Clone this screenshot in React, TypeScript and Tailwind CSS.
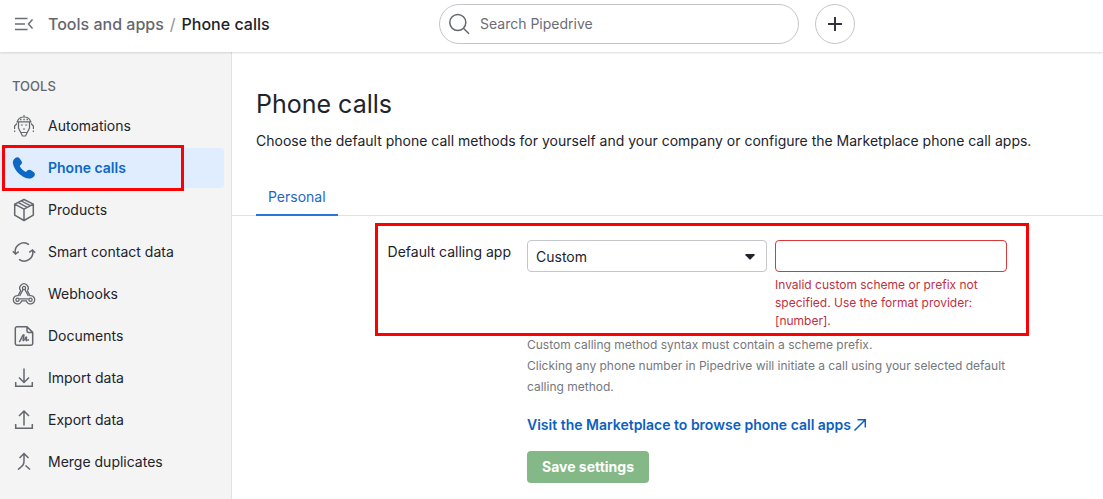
import type { ReactNode } from "react";

function Icon({ children }: { children: ReactNode }) {
  return (
    <svg
      viewBox="0 0 24 24"
      className="size-6 shrink-0"
      fill="none"
      stroke="currentColor"
      strokeWidth="1.5"
      aria-hidden="true"
    >
      {children}
    </svg>
  );
}

const tools = [
  {
    name: "Automations",
    icon: (
      <Icon>
        <g strokeWidth="1.2">
          <path d="M5.500 7.500C6.200 4.500 8.500 3 12 3s5.800 1.500 6.500 4.500M12 1v2M4.500 7.800h15" />
          <path strokeWidth="1.500" d="M8 5.500h1.500M11.300 5.500h1.500M14.500 5.500H16" />
          <path d="M6.500 8v6l2.500 5 1.500 3h3l1.500-3 2.500-5V8M8.500 18.500h7" />
          <path d="M8.800 11h2M13.200 11h2M11 15h2" />
          <path d="M5 9.500 2.600 12v3M19 9.500l2.400 2.500v3M2.600 16.500V18M21.400 16.500V18" />
        </g>
      </Icon>
    ),
  },
  {
    name: "Phone calls",
    active: true,
    icon: (
      <Icon>
        <path
          fill="currentColor"
          stroke="none"
          d="M3 2.200C4.600.700 6.500.900 7.700 2.500l1.700 2.400c.9 1.300.7 2.700-.4 3.700l-.9.800c-.4.400-.4.900 0 1.400 1.300 2 2.900 3.500 4.900 4.800.5.300 1 .3 1.400-.1l.9-.9c1-1 2.400-1.200 3.700-.3l2.600 1.700c1.600 1.100 1.800 3 .4 4.500-1.300 1.500-3.300 2.300-5.500 2C9.300 21.500 2.100 14.200.900 7.200.600 5.200 1.500 3.500 3 2.200Z"
        />
      </Icon>
    ),
  },
  {
    name: "Products",
    icon: (
      <Icon>
        <path strokeLinejoin="round" d="m12 1.500 9.300 4.700v11L12 22.500l-9.300-5.300v-11L12 1.500ZM2.700 6.200l9.300 5 9.300-5M12 11.200v11.300" />
        <path strokeWidth="1.300" d="m9.300 3 9 4.700M6.300 4.600l9 4.700" />
      </Icon>
    ),
  },
  {
    name: "Smart contact data",
    icon: (
      <Icon>
        <path d="M17 4.600A8.700 8.700 0 0 0 3.400 13.500M7 19.400A8.700 8.700 0 0 0 20.600 10.500" />
        <path d="m.800 11.300 2.700 2.700 3.200-2.400M17.300 12.400l3.200-2.400 2.700 2.700" />
      </Icon>
    ),
  },
  {
    name: "Webhooks",
    icon: (
      <Icon>
        <g strokeWidth="1.300">
          <circle cx="12" cy="6" r="1.600" />
          <circle cx="5.500" cy="17.800" r="1.600" />
          <circle cx="18.500" cy="17.800" r="1.600" />
          <path d="M15.300 8.600a4.200 4.200 0 1 0-6.600 0L6.200 13.600a4.200 4.200 0 1 0 3.400 5.200h4.800a4.200 4.200 0 1 0 3.400-5.200l-2.500-5" />
          <path d="M11 7.600 7.600 14M7.300 16.900h9.400M13 7.600l3.400 6.400" />
        </g>
      </Icon>
    ),
  },
  {
    name: "Documents",
    icon: (
      <Icon>
        <path strokeLinejoin="round" d="M15 2.700H5a1.700 1.700 0 0 0-1.700 1.700v15.200c0 .9.800 1.700 1.700 1.700h14a1.700 1.700 0 0 0 1.700-1.700V8.400L15 2.700Zm0 0v4.200c0 .9.600 1.500 1.500 1.500h4.200" />
        <path strokeWidth="1.400" strokeLinejoin="round" strokeLinecap="round" d="M7.500 17.500c2-2 2.700-6.800 4.200-6.800 1.200 0-1.500 5.800-.5 6.100 1 .2 2.500-4.300 3.300-3.800.8.500-1.200 3.700-.2 3.700.8 0 .9-1.200 2.200-.7" />
      </Icon>
    ),
  },
  {
    name: "Import data",
    icon: (
      <Icon>
        <path d="M12 2.500v13.500M7 11.500l5 5 5-5M3.700 16v4.300h16.600V16" />
      </Icon>
    ),
  },
  {
    name: "Export data",
    icon: (
      <Icon>
        <path d="M12 17.500V3.500M7 8l5-5 5 5M3.700 16v4.300h16.600V16" />
      </Icon>
    ),
  },
  {
    name: "Merge duplicates",
    icon: (
      <Icon>
        <path d="M6 19.500c4.500-3.500 6-4.500 6-8.500V3.500M7.500 8 12 3.500 16.500 8M13.500 15.500l4.500 4" />
      </Icon>
    ),
  },
];

function Header() {
  return (
    <header className="relative z-10 flex h-[52px] items-center bg-white pb-1 shadow-[0_1px_2px_rgba(0,0,0,0.14)]">
      <div className="flex w-[439px] shrink-0 items-center pl-3">
        <button type="button" aria-label="Collapse menu" className="text-[#6b6d76]">
          <Icon>
            <path d="M3 6.500h12.500M3 12h10M3 17.500h12.500M20.500 7.500 16.500 12l4 4.500" />
          </Icon>
        </button>
        <nav className="flex items-center gap-[6px] pl-3 text-base font-medium">
          <a href="#" className="text-[#65676f]">Tools and apps</a>
          <span className="font-normal text-[#8f9197]">/</span>
          <span className="text-[#21232c]">Phone calls</span>
        </nav>
      </div>
      <label className="flex h-10 w-[360px] items-center gap-2 rounded-full border border-[#c5c6c9] px-2 text-[#65676f]">
        <Icon>
          <circle cx="9.800" cy="10.500" r="8" />
          <path d="m15.500 16.200 5.500 5.500" />
        </Icon>
        <input
          type="text"
          aria-label="Search Pipedrive"
          placeholder="Search Pipedrive"
          className="min-w-0 flex-1 outline-none placeholder:text-[#6b6d76]"
        />
      </label>
      <button
        type="button"
        aria-label="Add"
        className="ml-4 flex size-10 items-center justify-center rounded-full border border-[#c5c6c9] text-[#33343e]"
      >
        <svg viewBox="0 0 16 16" className="size-4" stroke="currentColor" strokeWidth="2" aria-hidden="true">
          <path d="M8 1v14M1 8h14" />
        </svg>
      </button>
    </header>
  );
}

function Sidebar() {
  return (
    <aside className="w-[232px] shrink-0 border-r border-[#e1e1e3] bg-[#f4f4f4] pt-6">
      <h2 className="px-3 text-[13px] leading-5 font-medium text-[#65676f]">TOOLS</h2>
      <ul className="mt-[10px] flex flex-col gap-[2px] pr-[7px]">
        {tools.map((tool) => (
          <li key={tool.name} className="relative">
            <a
              href="#"
              className={
                tool.active
                  ? "flex h-10 items-center gap-3 rounded bg-[#e0edff] pl-3 font-semibold text-[#0d68c5]"
                  : "flex h-10 items-center gap-3 pl-3 text-[#21232c]"
              }
            >
              <span className={tool.active ? "" : "text-[#65676f]"}>{tool.icon}</span>
              {tool.name}
            </a>
            {tool.active && (
              <div className="pointer-events-none absolute -inset-y-[3px] left-[2px] w-[182px] border-3 border-[#ff0000]" />
            )}
          </li>
        ))}
      </ul>
    </aside>
  );
}

function CallingForm() {
  return (
    <form className="w-[775px] pt-6">
      <div className="relative flex items-start gap-4">
        <label htmlFor="calling-app" className="w-[279px] shrink-0 text-right leading-6">
          Default calling app
        </label>
        <div className="flex flex-1 items-start gap-2">
          <div className="relative w-60 shrink-0">
            <select
              id="calling-app"
              className="h-8 w-full appearance-none rounded border border-[#c5c6c9] bg-white px-2 pt-[2px]"
            >
              <option>Custom</option>
            </select>
            <svg viewBox="0 0 10 6" className="pointer-events-none absolute top-[14px] right-3 h-[6px] w-[10px] fill-[#21232c]" aria-hidden="true">
              <path d="M1 0h8c.8 0 1 .6.500 1.200L5.700 5.300c-.4.400-1 .4-1.400 0L.5 1.200C0 .6.200 0 1 0Z" />
            </svg>
          </div>
          <div className="flex-1">
            <input
              type="text"
              aria-label="Custom scheme"
              aria-describedby="scheme-error"
              className="block h-8 w-full rounded border border-[#d83a3a] px-2 outline-none"
            />
            <p id="scheme-error" className="mt-1 text-xs leading-[18px] text-[#c12f3f]">
              Invalid custom scheme or prefix not specified. Use the format provider:[number].
            </p>
          </div>
        </div>
        <div className="pointer-events-none absolute -top-[17px] -right-[22px] -bottom-[6px] left-[143px] border-3 border-[#ff0000]" />
      </div>
      <div className="mt-1 ml-[295px]">
        <p className="text-xs leading-[21px] text-[#75777e]">
          Custom calling method syntax must contain a scheme prefix.
          <br />
          Clicking any phone number in Pipedrive will initiate a call using your selected default
          calling method.
        </p>
        <a href="#" className="mt-4 flex items-center gap-[2px] leading-6 font-semibold text-[#0d5fc0]">
          Visit the Marketplace to browse phone call apps
          <svg viewBox="0 0 14 14" className="size-[14px]" fill="none" stroke="currentColor" strokeWidth="1.500" aria-hidden="true">
            <path d="M1.500 12.500 12.300 1.700M4.500 1.700h7.800v7.800" />
          </svg>
        </a>
        <button type="button" className="mt-[14px] h-8 rounded bg-[#84b886] px-[15px] font-bold text-white">
          Save settings
        </button>
      </div>
    </form>
  );
}

export default function App() {
  return (
    <div className="flex min-h-screen flex-col overflow-hidden bg-white font-['Inter',sans-serif] text-sm text-[#21232c]">
      <Header />
      <div className="flex flex-1">
        <Sidebar />
        <main className="min-w-0 flex-1 pt-8">
          <div className="px-6">
            <h1 className="text-[25px] leading-10">Phone calls</h1>
            <p className="mt-[5px] leading-6">
              Choose the default phone call methods for yourself and your company or configure the
              Marketplace phone call apps.
            </p>
          </div>
          <div className="mt-6 flex border-b border-[#e1e1e3] px-6">
            <button type="button" className="-mb-px h-[39px] border-b-2 border-[#2a74da] px-3 pt-[2px] text-[#1f66c8]">
              Personal
            </button>
          </div>
          <CallingForm />
        </main>
      </div>
    </div>
  );
}
